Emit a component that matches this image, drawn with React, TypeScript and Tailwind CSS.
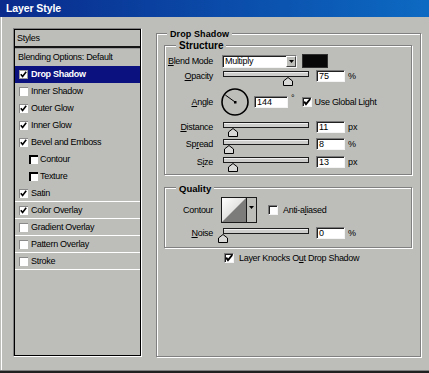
import React from "react";

const font = "font-['Liberation_Sans',Arial,sans-serif]";

function ListCheck({ checked, indent, selected }: { checked: boolean; indent?: boolean; selected?: boolean }) {
  return (
    <span
      className={
        "relative flex w-[9px] h-[9px] shrink-0 bg-white " +
        (indent
          ? "border-t-2 border-l-2 border-t-black border-l-black"
          : selected
          ? "border border-[#9a9a9a]"
          : "border-t border-l border-t-[#8a8a8a] border-l-[#8a8a8a]")
      }
    >
      {checked && (
        <svg width="9" height="9" viewBox="0 0 9 9" className="absolute left-[-1px] top-[-1px]">
          <polyline points="1.8,4.2 3.6,6.4 7.2,1.8" fill="none" stroke="#000" strokeWidth="1.6" />
        </svg>
      )}
    </span>
  );
}

function BoxCheck({ checked }: { checked: boolean }) {
  return (
    <span className="relative flex w-[10px] h-[10px] shrink-0 bg-white border-t border-l border-t-[#7a7a7a] border-l-[#7a7a7a] border-b border-r border-b-[#f4f4f4] border-r-[#f4f4f4] shadow-[inset_1px_1px_0_#202020]">
      {checked && (
        <svg width="10" height="10" viewBox="0 0 10 10" className="absolute left-[-1px] top-[-1px]">
          <polyline points="2.2,4.6 4,7.2 8.2,2" fill="none" stroke="#000" strokeWidth="1.9" />
        </svg>
      )}
    </span>
  );
}

function Input({ value, w = 29, h = 13 }: { value: string; w?: number; h?: number }) {
  return (
    <div
      className="flex items-center bg-white border border-t-[#7a7a7a] border-l-[#7a7a7a] border-b-[#f4f4f4] border-r-[#f4f4f4] shadow-[inset_1px_1px_0_#202020] pl-[2px] text-[9px] leading-none text-black"
      style={{ width: w, height: h }}
    >
      {value}
    </div>
  );
}

function Slider({ center }: { center: number }) {
  return (
    <div className="relative w-[86px] h-[14px] shrink-0">
      <div className="mt-[4px] h-[6px] border border-[#1c1c1c] bg-[#cdcecb] shadow-[inset_0_1px_0_#efefef]" />
      <svg
        width="10"
        height="9"
        viewBox="0 0 10 9"
        className="absolute top-[6px]"
        style={{ left: center - 5 }}
      >
        <path d="M0.5 8.5 V4 L5 0.5 L9.5 4 V8.5 Z" fill="#d8d8d6" stroke="#000" strokeWidth="1" />
      </svg>
    </div>
  );
}

function Label({ children }: { children: React.ReactNode }) {
  return <div className="w-[48px] shrink-0 text-right text-[9px] leading-none tracking-[-0.3px] text-black">{children}</div>;
}

function SliderRow({ label, center, value, unit, mt }: { label: React.ReactNode; center: number; value: string; unit: string; mt: string }) {
  return (
    <div className={"flex items-center h-[14px] " + mt}>
      <Label>{label}</Label>
      <div className="ml-[10px]">
        <Slider center={center} />
      </div>
      <div className="ml-[7px]">
        <Input value={value} h={12} />
      </div>
      <span className="ml-[3px] text-[9px] leading-none">{unit}</span>
    </div>
  );
}

const etched = "border border-[#808080] shadow-[1px_1px_0_#fff,inset_1px_1px_0_#fff]";

export default function App() {
  const items: { label: string; checked?: boolean; plain?: boolean; selected?: boolean; indent?: boolean; line?: boolean }[] = [
    { label: "Blending Options: Default", plain: true },
    { label: "Drop Shadow", checked: true, selected: true },
    { label: "Inner Shadow", checked: false },
    { label: "Outer Glow", checked: true },
    { label: "Inner Glow", checked: true },
    { label: "Bevel and Emboss", checked: true },
    { label: "Contour", checked: false, indent: true },
    { label: "Texture", checked: false, indent: true },
    { label: "Satin", checked: true, line: true },
    { label: "Color Overlay", checked: true, line: true },
    { label: "Gradient Overlay", checked: false, line: true },
    { label: "Pattern Overlay", checked: false, line: true },
    { label: "Stroke", checked: false, line: true },
  ];

  return (
    <div className={"w-[429px] h-[373px] flex flex-col overflow-hidden bg-[#bdbeba] text-black " + font}>
      {/* Title bar */}
      <div className="h-[17px] shrink-0 flex items-center pl-[6px] bg-gradient-to-r from-[#0a2a8c] via-[#0b4aa8] to-[#0d6ac2]">
        <span className="text-white font-bold text-[10.5px] leading-none tracking-[-0.1px]">Layer Style</span>
      </div>

      {/* Body */}
      <div className="flex-1 flex items-start pt-[11px] pl-[13px] shadow-[inset_1px_0_0_#bdbeba,inset_2px_0_0_#fff]">
        {/* Styles list */}
        <div className="w-[129px] h-[329px] shrink-0 border border-t-[#808080] border-l-[#808080] border-b-white border-r-white">
          <div className="w-full h-full border border-black flex flex-col">
            <div className="h-[16px] flex items-center pl-[2px] text-[9px] leading-none tracking-[-0.3px]">Styles</div>
            <div className="h-[2px] bg-[#151515]" />
            <div className="h-[1px] bg-[#9a9a9a]" />
            {items.map((it) => (
              <div
                key={it.label}
                className={
                  "h-[17px] flex items-center text-[9px] leading-none tracking-[-0.3px] " +
                  (it.selected ? "bg-[#0c1180] text-white font-bold " : "") +
                  (it.line ? "border-b border-white " : "") +
                  (it.plain ? "pl-[3px]" : it.indent ? "pl-[14px]" : "pl-[4px]")
                }
              >
                {it.plain ? (
                  <span>{it.label}</span>
                ) : (
                  <>
                    <ListCheck checked={!!it.checked} indent={it.indent} selected={it.selected} />
                    <span className={it.indent ? "ml-[2px]" : "ml-[3px]"}>{it.label}</span>
                  </>
                )}
              </div>
            ))}
          </div>
        </div>

        {/* Drop Shadow group */}
        <div className={"relative mt-[5px] ml-[14px] w-[265px] h-[324px] shrink-0 flex flex-col pt-[11px] pl-[7px] " + etched}>
          <span className="absolute left-[10px] top-[-5px] h-[11px] px-[3px] bg-[#bdbeba] font-bold text-[9px] leading-[11px] tracking-[0.1px]">
            Drop Shadow
          </span>

          {/* Structure */}
          <div className={"relative w-[248px] h-[130px] flex flex-col pt-[8px] " + etched}>
            <span className="absolute left-[11px] top-[-6px] h-[11px] px-[3px] bg-[#bdbeba] font-bold text-[10px] leading-[11px]">
              Structure
            </span>

            {/* Blend mode */}
            <div className="flex items-center h-[14px]">
              <Label>
                <u>B</u>lend Mode
              </Label>
              <div className="ml-[9px] w-[75px] h-[13px] flex bg-white border border-t-[#7a7a7a] border-l-[#7a7a7a] border-b-[#f4f4f4] border-r-[#f4f4f4] shadow-[inset_1px_1px_0_#202020]">
                <div className="flex-1 flex items-center pl-[2px] text-[9px] leading-none tracking-[-0.3px]">Multiply</div>
                <div className="w-[10px] h-full flex items-center justify-center bg-[#bdbeba] border border-t-white border-l-white border-b-[#404040] border-r-[#404040]">
                  <svg width="5" height="3" viewBox="0 0 5 3">
                    <path d="M0 0 H5 L2.5 3 Z" fill="#000" />
                  </svg>
                </div>
              </div>
              <div className="ml-[5px] w-[26px] h-[14px] bg-[#080808] border border-[#303030]" />
            </div>

            <SliderRow label={<><u>O</u>pacity</>} center={64.5} value="75" unit="%" mt="mt-[1px]" />

            {/* Angle */}
            <div className="flex items-center h-[30px] mt-[4px]">
              <Label>
                <u>A</u>ngle
              </Label>
              <svg width="28" height="28" viewBox="0 0 28 28" className="ml-[8px] shrink-0">
                <circle cx="14" cy="14" r="13" fill="none" stroke="#000" strokeWidth="1.6" />
                <line x1="14" y1="14" x2="4.3" y2="7" stroke="#000" strokeWidth="1" />
                <rect x="13" y="13" width="2.5" height="2.5" fill="#000" />
              </svg>
              <div className="ml-[5px]">
                <Input value="144" w={34} h={12} />
              </div>
              <span className="ml-[3px] text-[9px] leading-none -translate-y-[4px]">°</span>
              <div className="ml-[7px]">
                <BoxCheck checked />
              </div>
              <span className="ml-[3px] text-[9px] leading-none tracking-[-0.3px]">Use Global Light</span>
            </div>

            <SliderRow label={<><u>D</u>istance</>} center={9.7} value="11" unit="px" mt="mt-[3px]" />
            <SliderRow label={<>Sp<u>r</u>ead</>} center={6} value="8" unit="%" mt="mt-[3px]" />
            <SliderRow label={<>S<u>i</u>ze</>} center={9.7} value="13" unit="px" mt="mt-[4px]" />
          </div>

          {/* Quality */}
          <div className={"relative mt-[12px] w-[248px] h-[61px] flex flex-col pt-[9px] " + etched}>
            <span className="absolute left-[11px] top-[-5px] h-[11px] px-[3px] bg-[#bdbeba] font-bold text-[9.5px] leading-[11px]">
              Quality
            </span>
            <div className="flex items-center h-[26px]">
              <Label>Contour</Label>
              <div className="ml-[8px] w-[36px] h-[26px] flex border border-[#1a1a1a] bg-[#bdbeba]">
                <svg width="24" height="24" viewBox="0 0 24 24" className="shrink-0">
                  <defs>
                    <linearGradient id="cg" x1="0" y1="0" x2="1" y2="1">
                      <stop offset="0" stopColor="#ffffff" />
                      <stop offset="0.5" stopColor="#e4e4e2" />
                    </linearGradient>
                  </defs>
                  <rect x="0" y="0" width="24" height="24" fill="url(#cg)" />
                  <polygon points="0,24 24,0 24,24" fill="#7c7c7a" />
                </svg>
                <div className="flex-1 flex justify-center pt-[8px] border-l border-[#1a1a1a]">
                  <svg width="5" height="3" viewBox="0 0 5 3">
                    <path d="M0 0 H5 L2.5 3 Z" fill="#000" />
                  </svg>
                </div>
              </div>
              <div className="ml-[11px]">
                <BoxCheck checked={false} />
              </div>
              <span className="ml-[5px] text-[9px] leading-none tracking-[-0.3px]">
                Anti-a<u>l</u>iased
              </span>
            </div>
            <SliderRow label={<><u>N</u>oise</>} center={0.3} value="0" unit="%" mt="mt-[3px]" />
          </div>

          {/* Layer knocks out */}
          <div className="flex items-center h-[10px] mt-[5px] ml-[60px]">
            <BoxCheck checked />
            <span className="ml-[5px] text-[9px] leading-none tracking-[-0.3px]">
              Layer Knocks O<u>u</u>t Drop Shadow
            </span>
          </div>
        </div>
      </div>

      {/* bottom edge */}
      <div className="h-[1px] shrink-0 bg-[#808080]" />
      <div className="h-[2px] shrink-0 bg-[#202020]" />
    </div>
  );
}
